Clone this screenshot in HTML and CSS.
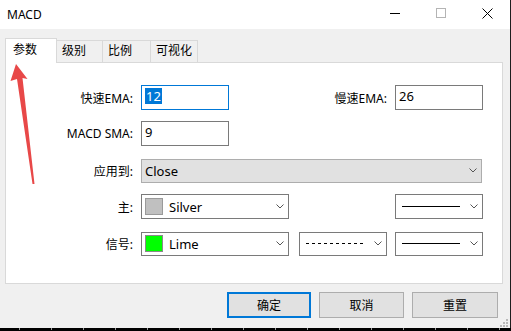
FILE: index.html
```html
<!DOCTYPE html>
<html lang="zh">
<head>
<meta charset="utf-8">
<title>MACD</title>
<link rel="stylesheet" href="styles.css">
</head>
<body>
<div class="window">
  <div class="titlebar">
    <span class="title">MACD</span>
    <div class="caption-buttons">
      <div class="cap-btn"><svg width="11" height="11" viewBox="0 0 11 11"><line x1="0" y1="5.5" x2="10" y2="5.5" stroke="#000" stroke-width="1"/></svg></div>
      <div class="cap-btn"><svg width="11" height="11" viewBox="0 0 11 11"><rect x="0.5" y="0.5" width="9" height="9" fill="none" stroke="#b4b4b4" stroke-width="1"/></svg></div>
      <div class="cap-btn"><svg width="11" height="11" viewBox="0 0 11 11"><path d="M0.5 0.5 L10.5 10.5 M10.5 0.5 L0.5 10.5" stroke="#000" stroke-width="1"/></svg></div>
    </div>
  </div>
  <div class="client">
    <div class="tabs">
      <div class="tab active">参数</div>
      <div class="tab t2">级别</div>
      <div class="tab t3">比例</div>
      <div class="tab t4">可视化</div>
    </div>
    <div class="panel">
      <div class="row">
        <label class="lbl">快速EMA:</label>
        <div class="edit focus"><span class="sel">12</span></div>
        <label class="lbl lbl2">慢速EMA:</label>
        <div class="edit">26</div>
      </div>
      <div class="row">
        <label class="lbl">MACD SMA:</label>
        <div class="edit">9</div>
      </div>
      <div class="row short">
        <label class="lbl">应用到:</label>
        <div class="combo wide">
          <span class="combo-text">Close</span>
          <svg class="chev" width="8" height="5" viewBox="0 0 8 5"><path d="M0.5 0.5 L4 4 L7.5 0.5" fill="none" stroke="#555" stroke-width="1"/></svg>
        </div>
      </div>
      <div class="row">
        <label class="lbl">主:</label>
        <div class="combo white color">
          <span class="swatch silver"></span>
          <span class="combo-text">Silver</span>
          <svg class="chev" width="8" height="5" viewBox="0 0 8 5"><path d="M0.5 0.5 L4 4 L7.5 0.5" fill="none" stroke="#555" stroke-width="1"/></svg>
        </div>
        <div class="spacer"></div>
        <div class="combo white line">
          <svg class="stroke" width="58" height="3" viewBox="0 0 58 3"><line x1="0" y1="1.5" x2="58" y2="1.5" stroke="#000" stroke-width="1"/></svg>
          <svg class="chev" width="8" height="5" viewBox="0 0 8 5"><path d="M0.5 0.5 L4 4 L7.5 0.5" fill="none" stroke="#555" stroke-width="1"/></svg>
        </div>
      </div>
      <div class="row short">
        <label class="lbl">信号:</label>
        <div class="combo white color">
          <span class="swatch lime"></span>
          <span class="combo-text">Lime</span>
          <svg class="chev" width="8" height="5" viewBox="0 0 8 5"><path d="M0.5 0.5 L4 4 L7.5 0.5" fill="none" stroke="#555" stroke-width="1"/></svg>
        </div>
        <div class="combo white line mid">
          <svg class="stroke" width="58" height="3" viewBox="0 0 58 3"><line x1="0" y1="1.5" x2="58" y2="1.5" stroke="#000" stroke-width="1" stroke-dasharray="3 3"/></svg>
          <svg class="chev" width="8" height="5" viewBox="0 0 8 5"><path d="M0.5 0.5 L4 4 L7.5 0.5" fill="none" stroke="#555" stroke-width="1"/></svg>
        </div>
        <div class="combo white line">
          <svg class="stroke" width="58" height="3" viewBox="0 0 58 3"><line x1="0" y1="1.5" x2="58" y2="1.5" stroke="#000" stroke-width="1"/></svg>
          <svg class="chev" width="8" height="5" viewBox="0 0 8 5"><path d="M0.5 0.5 L4 4 L7.5 0.5" fill="none" stroke="#555" stroke-width="1"/></svg>
        </div>
      </div>
    </div>
    <div class="buttons">
      <button class="btn default">确定</button>
      <button class="btn">取消</button>
      <button class="btn b3">重置</button>
    </div>
    <svg class="grip" width="9" height="9" viewBox="0 0 9 9">
      <g fill="#b8b8b8">
        <rect x="7" y="1" width="2" height="2"/>
        <rect x="4" y="4" width="2" height="2"/><rect x="7" y="4" width="2" height="2"/>
        <rect x="1" y="7" width="2" height="2"/><rect x="4" y="7" width="2" height="2"/><rect x="7" y="7" width="2" height="2"/>
      </g>
    </svg>
  </div>
  <svg class="arrow" width="40" height="130" viewBox="0 0 40 130">
    <polygon points="16,9 27.5,24 22.5,23 34.5,129 32.5,129 17,24 10.5,26" fill="#e84848"/>
  </svg>
</div>
<div class="chart-strip"></div>
</body>
</html>
```

FILE: styles.css
```css
* { box-sizing: border-box; }
html, body {
  margin: 0;
  padding: 0;
}
body {
  width: 511px;
  height: 331px;
  background: #000;
  overflow: hidden;
  font-family: "Noto Sans", "Noto Sans CJK SC", sans-serif;
  font-size: 12px;
  color: #000;
}
.window {
  position: relative;
  width: 511px;
  height: 328px;
  border-right: 1px solid #1e1e1e;
  background: #f0f0f0;
  display: flex;
  flex-direction: column;
}
.titlebar {
  height: 29px;
  background: #fff;
  display: flex;
  align-items: center;
  justify-content: space-between;
}
.title {
  padding-left: 7px;
  font-size: 12px;
  line-height: 29px;
}
.caption-buttons {
  display: flex;
  height: 29px;
}
.cap-btn {
  width: 46px;
  height: 29px;
  display: flex;
  align-items: center;
  justify-content: center;
  padding-bottom: 3px;
}
.client {
  position: relative;
  flex: 1;
  padding: 9px 0 0 5px;
  display: flex;
  flex-direction: column;
}
.tabs {
  display: flex;
  align-items: flex-end;
  height: 24px;
}
.tab {
  height: 22px;
  border: 1px solid #d9d9d9;
  border-bottom: none;
  background: #f0f0f0;
  line-height: 20px;
  padding-left: 5px;
  margin-left: -1px;
  white-space: nowrap;
}
.tab.active {
  margin-left: 0;
  width: 52px;
  height: 25px;
  margin-bottom: -1px;
  background: #fff;
  position: relative;
  z-index: 1;
  padding-left: 7px;
  line-height: 22px;
}
.tab.t2 { width: 47px; }
.tab.t3 { width: 49px; }
.tab.t4 { width: 48px; }
.panel {
  width: 498px;
  height: 222px;
  border: 1px solid #d9d9d9;
  background: #fff;
  padding-top: 22px;
  display: flex;
  flex-direction: column;
  gap: 11px;
}
.row {
  display: flex;
  align-items: center;
  height: 25px;
}
.row.short { margin-top: 1px; }
.lbl {
  width: 127px;
  text-align: right;
  padding-right: 0;
  margin-right: 8px;
  white-space: nowrap;
}
.lbl2 { width: 158px; margin-right: 8px; }
.edit {
  width: 88px;
  height: 25px;
  border: 1px solid #7a7a7a;
  background: #fff;
  padding: 2px 0 0 3px;
  line-height: 16px;
  font-size: 13px;
}
.edit.focus { border-color: #0078d7; }
.sel {
  background: #0078d7;
  color: #fff;
  display: inline-block;
  padding: 0 1px;
}
.combo {
  height: 25px;
  border: 1px solid #adadad;
  background: #e1e1e1;
  display: flex;
  align-items: center;
  padding-left: 3px;
  padding-right: 4px;
  font-size: 13px;
}
.row.short .combo { height: 24px; }
.combo.white {
  background: #fff;
  border-color: #7a7a7a;
}
.combo-text { flex: 1; }
.chev { flex: none; }
.combo.wide { width: 341px; }
.combo.color { width: 148px; }
.swatch {
  width: 18px;
  height: 17px;
  border: 1px solid #9a9a9a;
  margin-right: 6px;
  flex: none;
}
.swatch.silver { background: #c0c0c0; }
.swatch.lime { background: #00ff00; border-color: #8a8a8a; }
.spacer { width: 106px; }
.combo.line {
  width: 88px;
  padding-left: 6px;
  justify-content: space-between;
}
.combo.mid { margin-left: 10px; margin-right: 8px; }
.stroke { display: block; }
.buttons {
  display: flex;
  justify-content: flex-end;
  gap: 8px;
  margin-top: 8px;
  padding-right: 12px;
}
.btn {
  width: 85px;
  height: 26px;
  border: 1px solid #adadad;
  background: #e1e1e1;
  font-family: inherit;
  font-size: 12px;
  padding: 0;
  color: #000;
}
.btn.b3 { width: 86px; }
.btn.default {
  border: 2px solid #0078d7;
  width: 84px;
}
.grip {
  position: absolute;
  right: 2px;
  bottom: 1px;
}
.arrow {
  position: absolute;
  left: 0;
  top: 55px;
}
.chart-strip {
  height: 3px;
  background-color: #000;
  background-image: repeating-linear-gradient(to right, transparent 0, transparent 19px, #9a9a9a 19px, #9a9a9a 20px, transparent 20px, transparent 32px);
  background-size: 100% 2px;
  background-repeat: no-repeat;
}
```
